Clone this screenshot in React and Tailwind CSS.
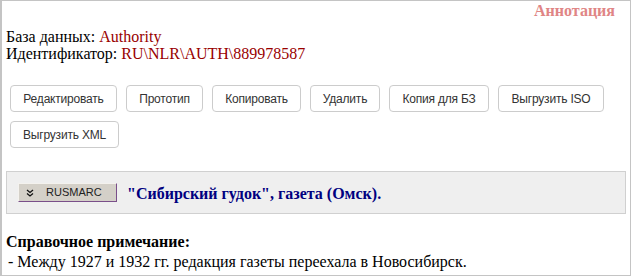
const BUTTONS = [
  ["Редактировать", "w-[107px]"],
  ["Прототип", "w-[77px]"],
  ["Копировать", "w-[89px]"],
  ["Удалить", "w-[70px]"],
  ["Копия для БЗ", "w-[100px]"],
  ["Выгрузить ISO", "w-[106px]"],
  ["Выгрузить XML", "w-[109px]"],
];

function ActionButton({ label, width }) {
  return (
    <button
      className={`${width} h-[27px] rounded-[4px] border border-[#cccccc] bg-white text-[12px] tracking-[-0.2px] text-[#333333] font-['Liberation_Sans',Arial,sans-serif] leading-none whitespace-nowrap`}
    >
      {label}
    </button>
  );
}

export default function App() {
  return (
    <div className="w-[631px] h-[276px] bg-white border border-[#c4c4c4] border-l-2 font-['Liberation_Serif','Times_New_Roman',serif] text-[16px] leading-[17px] text-black overflow-hidden">
      <div className="flex justify-end pr-[15px] pt-[1px]">
        <span className="font-bold text-[#e08585]">Аннотация</span>
      </div>

      <div className="pl-[4px] mt-[9px]">
        <div>
          База данных: <span className="text-[#990000]">Authority</span>
        </div>
        <div>
          Идентификатор:{" "}
          <span className="text-[#990000]">RU\NLR\AUTH\889978587</span>
        </div>
      </div>

      <div className="flex flex-wrap gap-x-[9px] gap-y-[9px] pl-[8px] pr-[10px] mt-[23px]">
        {BUTTONS.map(([b, w]) => (
          <ActionButton key={b} label={b} width={w} />
        ))}
      </div>

      <div className="mx-[4px] mt-[23px] h-[43px] bg-[#efefef] border border-[#d0d0d0] flex items-center pl-[11px] gap-[10px]">
        <button className="w-[99px] h-[19px] bg-[#d4d0c8] border border-[#f4f2ee] border-r-[#7a4f8a] border-b-[#7a4f8a] flex items-center pl-[7px] gap-[12px] text-[11px] text-[#222222] font-['Liberation_Sans',Arial,sans-serif]">
          <svg width="8" height="8" viewBox="0 0 8 8" fill="none" stroke="#111" strokeWidth="1.3">
            <path d="M1 1 L4 3.5 L7 1" />
            <path d="M1 4.5 L4 7 L7 4.5" />
          </svg>
          <span>RUSMARC</span>
        </button>
        <span className="font-bold text-[#000080] pt-[2px]">
          "Сибирский гудок", газета (Омск).
        </span>
      </div>

      <div className="pl-[4px] mt-[19px]">
        <div className="font-bold">Справочное примечание:</div>
        <div className="pl-[2px] mt-[3px]">
          - Между 1927 и 1932 гг. редакция газеты переехала в Новосибирск.
        </div>
      </div>
    </div>
  );
}
